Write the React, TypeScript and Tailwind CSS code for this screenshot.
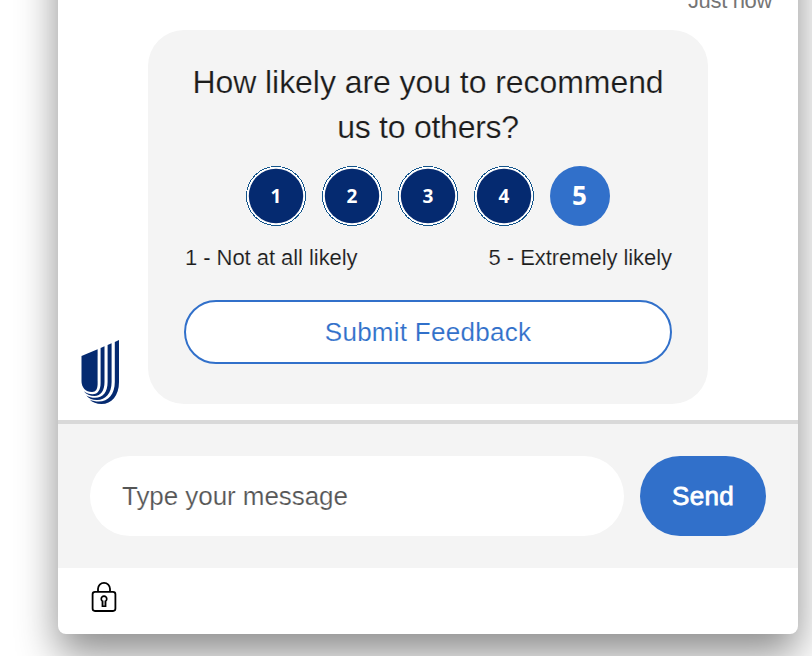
import React, { useState } from "react";

function Logo() {
  return (
    <svg width="40" height="68" viewBox="0 0 40 68" fill="#052a70" aria-label="Logo">
      <path d="M1.5 20 L17.6 13.2 V48 C17.6 53 15.8 56 12 56 C5.5 56 1.5 51.5 1.5 45 Z" />
      <path d="M20.6 12 L24.5 10.3 V46 C24.5 54.5 20.8 60 14.5 60 C10 60 6 58.4 3.8 55.2 C6.5 57.3 9.2 58.2 12.6 58.2 C18 58.2 20.6 53.6 20.6 47 Z" />
      <path d="M27.6 9 L31.6 7.3 V46 C31.6 57.5 25.5 64 17 64 C12.5 64 8.8 62.6 6.2 59.4 C9 61.1 12 61.8 15 61.8 C23 61.8 27.6 56 27.6 46 Z" />
      <path d="M34.8 5.9 L39 4.1 V46 C39 60 31.5 68 21.5 68 C16.5 68 12.4 66.6 9.6 63.6 C12.6 65 15.4 65.6 18.6 65.6 C28.5 65.6 34.8 58 34.8 46 Z" />
    </svg>
  );
}

function Lock() {
  return (
    <svg width="28" height="34" viewBox="0 0 28 34" fill="none" stroke="#000" strokeWidth="1.8">
      <rect x="2.6" y="11.8" width="22.8" height="19.2" rx="2.4" />
      <path d="M8 11.8 V8.8 a6 6 0 0 1 12 0 V11.8" />
      <path d="M12.4 26.2 V21.2 a2.8 2.8 0 1 1 3.2 0 V26.2 Z" fill="#aaa" strokeWidth="1.6" />
      <circle cx="14" cy="18.9" r="1.6" fill="#fff" stroke="none" />
    </svg>
  );
}

function Rating({ value }: { value: number }) {
  return (
    <span className="relative flex size-[60px] items-center justify-center">
      <svg className="absolute inset-0" width="60" height="60" viewBox="0 0 60 60">
        <circle cx="30" cy="30" r="30" fill="#fff" />
        <circle cx="30" cy="30" r="29.5" fill="none" stroke="#14558c" strokeWidth="1" shapeRendering="crispEdges" />
        <circle cx="30" cy="30" r="27.2" fill="#052a70" />
      </svg>
      <span className="relative">{value}</span>
    </span>
  );
}

export default function App() {
  const [score, setScore] = useState(5);
  return (
    <div className="h-[656px] w-[812px] overflow-hidden bg-white pl-[58px] font-['Liberation_Sans',Arial,sans-serif]">
      <div className="-mt-[100px] flex h-[734px] w-[740px] flex-col rounded-b-lg bg-white pt-[100px] shadow-[0_20px_40px_rgba(0,0,0,0.45)]">
        <div className="flex h-[30px] shrink-0 justify-end pr-[26px]">
          <span className="-mt-[11px] h-6 whitespace-nowrap text-[22px] leading-6 tracking-[-0.35px] text-[#757575]">Just now</span>
        </div>
        <div className="flex h-[374px] shrink-0 items-end pl-[22px]">
          <Logo />
          <div className="ml-7 flex h-[374px] w-[560px] flex-col rounded-[36px] bg-[#f4f4f4] px-9 pt-[30px] text-[#1c1c1c]">
            <h1 className="whitespace-nowrap text-center text-[32px] leading-[45px] [-webkit-text-stroke:0.2px_#f4f4f4]">
              <span className="tracking-[-0.06px]">How likely are you to recommend</span>
              <br />
              <span className="tracking-[-0.25px]">us to others?</span>
            </h1>
            <div className="mt-4 flex justify-center gap-4 font-['Open_Sans','Noto_Sans',sans-serif] font-bold text-white">
              {[1, 2, 3, 4, 5].map((n) => (
                <button
                  key={n}
                  onClick={() => setScore(n)}
                  className={
                    n === score
                      ? "flex size-[60px] items-center justify-center rounded-full bg-[#3170ca] pb-0.5 pr-px text-[26px] leading-none"
                      : "size-[60px] rounded-full text-[19px] leading-none"
                  }
                >
                  {n === score ? n : <Rating value={n} />}
                </button>
              ))}
            </div>
            <div className="mt-[18px] flex h-7 justify-between whitespace-nowrap pl-px text-[22px] leading-7 [-webkit-text-stroke:0.15px_#f4f4f4]">
              <span className="tracking-[-0.05px]">1 - Not at all likely</span>
              <span className="tracking-[-0.06px]">5 - Extremely likely</span>
            </div>
            <button className="mt-7 h-16 w-full rounded-full border-2 border-[#3170ca] bg-white text-[26px] leading-none tracking-[0.27px] text-[#3170ca] [-webkit-text-stroke:0.15px_white]">
              Submit Feedback
            </button>
          </div>
        </div>
        <div className="mt-4 flex h-[148px] shrink-0 items-start gap-4 border-t-4 border-[#d9d9d9] bg-[#f4f4f4] pl-8 pt-8">
          <input
            placeholder="Type your message"
            className="h-20 w-[534px] rounded-full bg-white px-8 text-[26px] tracking-[-0.06px] [-webkit-text-stroke:0.2px_white] placeholder:text-[#555]"
          />
          <button className="h-20 w-[126px] rounded-full bg-[#3170ca] text-[26px] tracking-[0.3px] text-white [-webkit-text-stroke:0.8px_white]">Send</button>
        </div>
        <div className="flex h-[66px] items-start pl-8 pt-[12px]">
          <Lock />
        </div>
      </div>
    </div>
  );
}
